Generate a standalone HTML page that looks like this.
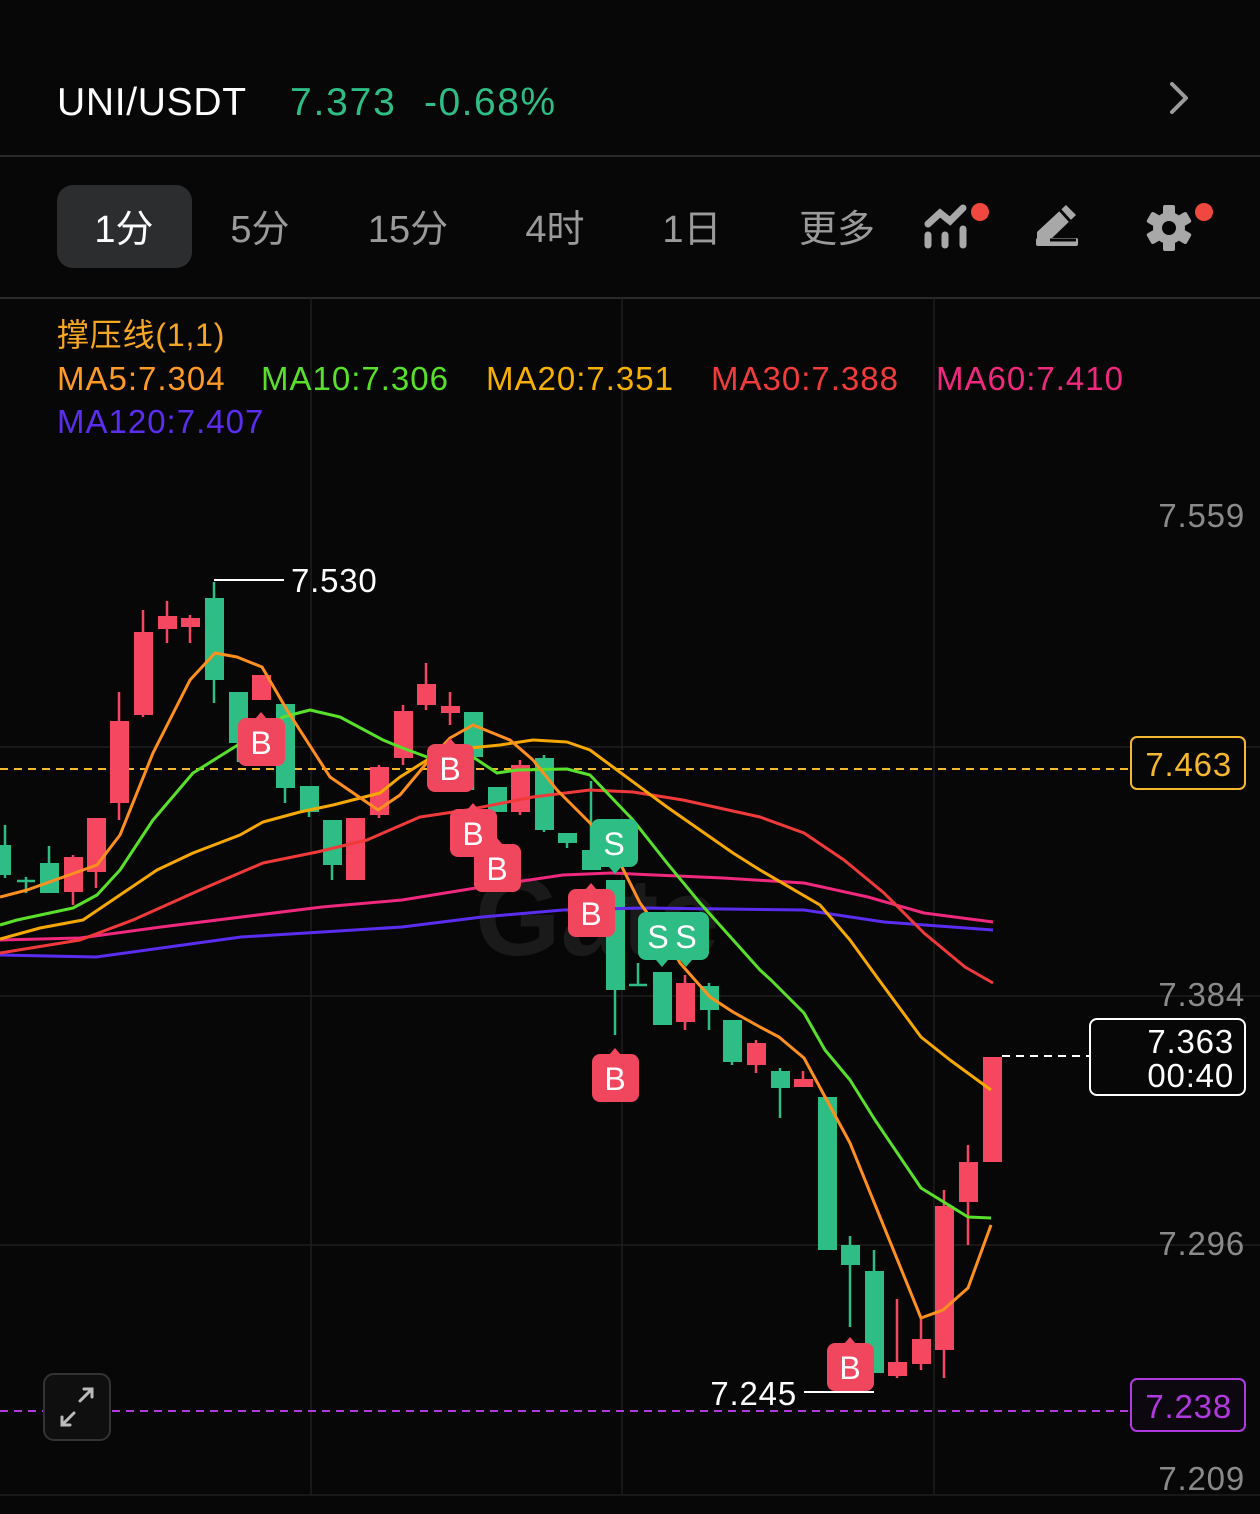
<!DOCTYPE html>
<html><head><meta charset="utf-8">
<style>
html,body{margin:0;padding:0;background:#070707;}
body{width:1260px;height:1514px;overflow:hidden;position:relative;font-family:"Liberation Sans","Noto Sans CJK SC",sans-serif;}
svg{position:absolute;left:0;top:0;}
</style></head><body>
<svg width="1260" height="1514" viewBox="0 0 1260 1514" xmlns="http://www.w3.org/2000/svg" font-family="Liberation Sans, Noto Sans CJK SC, sans-serif">
<rect width="1260" height="1514" fill="#070707"/>
<!-- header -->
<text x="57" y="115" font-size="39" fill="#fff" letter-spacing="0.7">UNI/USDT</text>
<text x="290" y="115" font-size="39" fill="#2ebd85" letter-spacing="1.8">7.373</text>
<text x="424" y="115" font-size="39" fill="#2ebd85" letter-spacing="1.5">-0.68%</text>
<path d="M1172 84 L1186 98 L1172 112" stroke="#9a9a9a" stroke-width="4" fill="none" stroke-linecap="round" stroke-linejoin="round"/>
<line x1="0" y1="156" x2="1260" y2="156" stroke="#2a2a2a" stroke-width="2"/>
<!-- tabs -->
<rect x="57" y="185" width="135" height="83" rx="16" fill="#2c2d2f"/>
<text x="124" y="242" font-size="38" fill="#fff" text-anchor="middle">1分</text>
<g font-size="38" fill="#9a9a9a" text-anchor="middle">
<text x="260" y="242">5分</text>
<text x="408" y="242">15分</text>
<text x="555" y="242">4时</text>
<text x="692" y="242">1日</text>
<text x="837" y="242">更多</text>
</g>
<!-- indicator icon -->
<g stroke="#a8a8a8" stroke-width="7" stroke-linecap="round" fill="none">
<path d="M928 224 L940 213 L950 221 L963 208"/>
<line x1="928" y1="235" x2="928" y2="245"/><line x1="945" y1="235" x2="945" y2="245"/><line x1="963" y1="229" x2="963" y2="245"/>
</g>
<circle cx="980" cy="212" r="9" fill="#f0473f"/>
<!-- pencil -->
<path d="M1037 243 L1037 232 L1066 205 L1076 215 L1050 240 Z" fill="#a8a8a8"/>
<rect x="1036" y="238" width="42" height="8" rx="2" fill="#a8a8a8"/>
<line x1="1060" y1="210" x2="1070" y2="221" stroke="#070707" stroke-width="3"/>
<path d="M1050 240 L1076 240" stroke="#070707" stroke-width="3"/>
<!-- gear -->
<g fill="#a8a8a8">
<circle cx="1169" cy="228" r="16"/>
<g transform="translate(1169 228)">
<rect x="-6" y="-23" width="12" height="10" rx="2"/>
<rect x="-6" y="-23" width="12" height="10" rx="2" transform="rotate(60)"/>
<rect x="-6" y="-23" width="12" height="10" rx="2" transform="rotate(120)"/>
<rect x="-6" y="-23" width="12" height="10" rx="2" transform="rotate(180)"/>
<rect x="-6" y="-23" width="12" height="10" rx="2" transform="rotate(240)"/>
<rect x="-6" y="-23" width="12" height="10" rx="2" transform="rotate(300)"/>
</g></g>
<circle cx="1169" cy="228" r="7" fill="#070707"/>
<circle cx="1204" cy="212" r="9" fill="#f0473f"/>
<line x1="0" y1="298" x2="1260" y2="298" stroke="#2a2a2a" stroke-width="2"/>
<!-- grid -->
<g stroke="#1f1f1f" stroke-width="1.5">
<line x1="311" y1="298" x2="311" y2="1495"/><line x1="622" y1="298" x2="622" y2="1495"/><line x1="934" y1="298" x2="934" y2="1495"/>
<line x1="0" y1="747" x2="1260" y2="747"/><line x1="0" y1="996" x2="1260" y2="996"/><line x1="0" y1="1245" x2="1260" y2="1245"/><line x1="0" y1="1495" x2="1260" y2="1495"/>
</g>
<!-- legend -->
<text x="57" y="346" font-size="32" fill="#f5a623" letter-spacing="0.8">撑压线(1,1)</text>
<g font-size="33" letter-spacing="1">
<text x="57" y="390" fill="#ff9a26">MA5:7.304</text>
<text x="261" y="390" fill="#58e02a">MA10:7.306</text>
<text x="486" y="390" fill="#f7b000">MA20:7.351</text>
<text x="711" y="390" fill="#f23b3b">MA30:7.388</text>
<text x="936" y="390" fill="#f0287e">MA60:7.410</text>
<text x="57" y="433" fill="#5a2df0">MA120:7.407</text>
</g>
<!-- watermark -->
<text x="475" y="955" font-size="110" font-weight="bold" fill="#1a1a1a">Gate</text>
<!-- axis labels -->
<g font-size="33" fill="#8a8a8a" text-anchor="end" letter-spacing="0.8">
<text x="1245" y="527">7.559</text>
<text x="1245" y="1006">7.384</text>
<text x="1245" y="1255">7.296</text>
<text x="1245" y="1490">7.209</text>
</g>
<!-- dashed lines -->
<line x1="0" y1="769" x2="1130" y2="769" stroke="#f5b82e" stroke-width="2" stroke-dasharray="8 6"/>
<line x1="0" y1="1411" x2="1130" y2="1411" stroke="#b03ae0" stroke-width="2" stroke-dasharray="8 6"/>
<line x1="1002" y1="1056" x2="1090" y2="1056" stroke="#fff" stroke-width="2" stroke-dasharray="8 6"/>
<!-- candles -->
<g>
<g fill="#2ebd85" stroke="#2ebd85" stroke-width="2.5">
<line x1="5" y1="825" x2="5" y2="878"/><rect x="-4" y="845" width="15" height="30" stroke="none"/>
<line x1="26" y1="877" x2="26" y2="893"/><line x1="17" y1="881" x2="35" y2="881"/>
<line x1="49" y1="846" x2="49" y2="893"/><rect x="40" y="863" width="19" height="30" stroke="none"/>
<line x1="214" y1="582" x2="214" y2="703"/><rect x="205" y="598" width="19" height="82" stroke="none"/>
<line x1="238" y1="692" x2="238" y2="762"/><rect x="229" y="692" width="19" height="51" stroke="none"/>
<line x1="285" y1="704" x2="285" y2="803"/><rect x="276" y="704" width="19" height="84" stroke="none"/>
<line x1="309" y1="786" x2="309" y2="817"/><rect x="300" y="786" width="19" height="26" stroke="none"/>
<line x1="332" y1="820" x2="332" y2="880"/><rect x="323" y="820" width="19" height="45" stroke="none"/>
<line x1="473" y1="712" x2="473" y2="790"/><rect x="464" y="712" width="19" height="45" stroke="none"/>
<rect x="488" y="787" width="19" height="25" stroke="none"/>
<line x1="544" y1="755" x2="544" y2="832"/><rect x="535" y="758" width="19" height="72" stroke="none"/>
<line x1="567" y1="833" x2="567" y2="848"/><rect x="558" y="833" width="19" height="10" stroke="none"/>
<line x1="591" y1="781" x2="591" y2="870"/><rect x="582" y="850" width="19" height="20" stroke="none"/>
<line x1="615" y1="880" x2="615" y2="1035"/><rect x="606" y="880" width="19" height="110" stroke="none"/>
<line x1="638" y1="963" x2="638" y2="985"/><line x1="629" y1="985" x2="647" y2="985"/>
<rect x="653" y="972" width="19" height="53" stroke="none"/>
<line x1="709" y1="983" x2="709" y2="1030"/><rect x="700" y="986" width="19" height="24" stroke="none"/>
<line x1="732" y1="1020" x2="732" y2="1065"/><rect x="723" y="1020" width="19" height="42" stroke="none"/>
<line x1="780" y1="1068" x2="780" y2="1118"/><rect x="771" y="1071" width="19" height="17" stroke="none"/>
<rect x="818" y="1097" width="19" height="153" stroke="none"/>
<line x1="850" y1="1236" x2="850" y2="1327"/><rect x="841" y="1245" width="19" height="20" stroke="none"/>
<line x1="874" y1="1250" x2="874" y2="1373"/><rect x="865" y="1271" width="19" height="102" stroke="none"/>
</g>
<g fill="#f5475f" stroke="#f5475f" stroke-width="2.5">
<line x1="73" y1="855" x2="73" y2="905"/><rect x="64" y="857" width="19" height="35" stroke="none"/>
<line x1="96" y1="818" x2="96" y2="888"/><rect x="87" y="818" width="19" height="54" stroke="none"/>
<line x1="119" y1="692" x2="119" y2="820"/><rect x="110" y="721" width="19" height="82" stroke="none"/>
<line x1="143" y1="610" x2="143" y2="717"/><rect x="134" y="632" width="19" height="83" stroke="none"/>
<line x1="167" y1="601" x2="167" y2="643"/><rect x="158" y="616" width="19" height="13" stroke="none"/>
<line x1="190" y1="615" x2="190" y2="643"/><rect x="181" y="618" width="19" height="9" stroke="none"/>
<rect x="252" y="675" width="19" height="25" stroke="none"/>
<rect x="346" y="818" width="19" height="62" stroke="none"/>
<line x1="379" y1="765" x2="379" y2="818"/><rect x="370" y="767" width="19" height="48" stroke="none"/>
<line x1="403" y1="705" x2="403" y2="765"/><rect x="394" y="711" width="19" height="47" stroke="none"/>
<line x1="426" y1="663" x2="426" y2="710"/><rect x="417" y="684" width="19" height="21" stroke="none"/>
<line x1="450" y1="692" x2="450" y2="725"/><rect x="441" y="706" width="19" height="7" stroke="none"/>
<line x1="520" y1="760" x2="520" y2="815"/><rect x="511" y="765" width="19" height="47" stroke="none"/>
<line x1="685" y1="975" x2="685" y2="1030"/><rect x="676" y="983" width="19" height="39" stroke="none"/>
<line x1="756" y1="1040" x2="756" y2="1073"/><rect x="747" y="1043" width="19" height="22" stroke="none"/>
<line x1="803" y1="1071" x2="803" y2="1087"/><rect x="794" y="1079" width="19" height="8" stroke="none"/>
<line x1="897" y1="1299" x2="897" y2="1378"/><rect x="888" y="1362" width="19" height="14" stroke="none"/>
<line x1="921" y1="1318" x2="921" y2="1370"/><rect x="912" y="1339" width="19" height="25" stroke="none"/>
<line x1="944" y1="1190" x2="944" y2="1378"/><rect x="935" y="1206" width="19" height="144" stroke="none"/>
<line x1="968" y1="1145" x2="968" y2="1245"/><rect x="959" y="1162" width="19" height="40" stroke="none"/>
<rect x="983" y="1057" width="19" height="105" stroke="none"/>
</g>
</g>
<!-- MA lines -->
<g fill="none" stroke-width="3" stroke-linejoin="round">
<polyline stroke="#5a2df0" points="0,955 96,957 241,937 322,932 402,927 482,917 563,910 643,908 804,910 884,922 993,930"/>
<polyline stroke="#f0287e" points="0,940 80,938 161,927 322,907 402,900 482,887 563,875 611,873 723,878 804,883 868,897 924,913 993,922"/>
<polyline stroke="#f03a3a" points="0,953 80,940 133,920 200,890 263,863 317,852 367,840 420,817 467,810 533,797 590,790 633,792 683,800 760,817 804,833 844,860 884,893 924,933 965,967 993,983"/>
<polyline stroke="#f7a800" points="0,939 40,928 83,920 117,897 157,870 193,853 240,835 263,822 300,812 333,805 380,793 400,777 427,760 450,750 500,745 533,740 567,742 590,750 617,770 667,807 700,830 733,853 760,870 820,905 850,940 879,980 921,1037 950,1060 991,1090"/>
<polyline stroke="#58e02a" points="0,925 17,920 73,908 97,895 120,870 153,820 193,773 233,748 283,717 310,710 340,717 383,740 400,747 427,757 473,757 497,773 517,770 567,769 590,775 633,820 667,863 700,903 760,970 771,980 804,1013 825,1050 850,1080 875,1120 921,1188 968,1217 991,1218"/>
<polyline stroke="#ff8f1f" points="0,897 27,890 97,865 120,835 153,753 190,680 215,653 237,657 262,667 287,710 330,777 378,810 400,795 425,765 450,738 473,725 510,740 533,760 557,790 590,823 617,857 640,903 667,940 680,963 710,997 733,1012 760,1027 779,1037 804,1058 850,1143 921,1318 943,1310 968,1288 991,1225"/>
</g>
<!-- high/low markers -->
<line x1="214" y1="580" x2="284" y2="580" stroke="#fff" stroke-width="2"/>
<text x="291" y="592" font-size="33" fill="#fff" letter-spacing="0.8">7.530</text>
<line x1="804" y1="1392" x2="874" y2="1392" stroke="#fff" stroke-width="2"/>
<text x="797" y="1405" font-size="33" fill="#fff" text-anchor="end" letter-spacing="0.8">7.245</text>
<!-- badges -->
<g font-size="32" fill="#fff" text-anchor="middle">
<g fill="#f0475f">
<path d="M261 712 l-6 7 h12 z"/><rect x="238" y="718" width="47" height="48" rx="8"/>
<path d="M450 738 l-6 7 h12 z"/><rect x="427" y="744" width="47" height="48" rx="8"/>
<path d="M473 803 l-6 7 h12 z"/><rect x="450" y="809" width="47" height="48" rx="8"/>
<path d="M497 838 l-6 7 h12 z"/><rect x="474" y="844" width="47" height="48" rx="8"/>
<path d="M591 883 l-6 7 h12 z"/><rect x="568" y="889" width="47" height="48" rx="8"/>
<path d="M615 1048 l-6 7 h12 z"/><rect x="592" y="1054" width="47" height="48" rx="8"/>
<path d="M850 1337 l-6 7 h12 z"/><rect x="827" y="1343" width="47" height="48" rx="8"/>
</g>
<g fill="#2ebd85">
<rect x="591" y="819" width="47" height="48" rx="8"/><path d="M609 867 l6 7 l6 -7 z"/>
<rect x="638" y="912" width="47" height="48" rx="8"/><path d="M656 960 l6 7 l6 -7 z"/>
<rect x="662" y="912" width="47" height="48" rx="8"/><path d="M680 960 l6 7 l6 -7 z"/>
</g>
<text x="261" y="754">B</text><text x="450" y="780">B</text><text x="473" y="845">B</text><text x="497" y="880">B</text>
<text x="591" y="925">B</text><text x="615" y="1090">B</text><text x="850" y="1379">B</text>
<text x="614" y="855">S</text><text x="658" y="948">S</text><text x="686" y="948">S</text>
</g>
<!-- right price boxes -->
<rect x="1131" y="737" width="114" height="52" rx="6" fill="#070707" stroke="#f5b82e" stroke-width="2"/>
<text x="1232" y="776" font-size="33" fill="#f5b82e" text-anchor="end" letter-spacing="0.8">7.463</text>
<rect x="1131" y="1379" width="114" height="52" rx="6" fill="#0d0710" stroke="#b03ae0" stroke-width="2"/>
<text x="1232" y="1418" font-size="33" fill="#b03ae0" text-anchor="end" letter-spacing="0.8">7.238</text>
<rect x="1090" y="1019" width="155" height="76" rx="7" fill="#070707" stroke="#fff" stroke-width="2"/>
<text x="1234" y="1053" font-size="33" fill="#fff" text-anchor="end" letter-spacing="0.8">7.363</text>
<text x="1234" y="1087" font-size="33" fill="#fff" text-anchor="end" letter-spacing="0.8">00:40</text>
<!-- expand button -->
<rect x="44" y="1374" width="66" height="66" rx="10" fill="#0f0f0f" stroke="#333" stroke-width="2"/>
<g stroke="#bbb" stroke-width="3" fill="none" stroke-linecap="round">
<path d="M80 1401 L92 1389 M84 1389 H92 V1397"/>
<path d="M74 1413 L62 1425 M62 1417 V1425 H70"/>
</g>
</svg>
</body></html>
